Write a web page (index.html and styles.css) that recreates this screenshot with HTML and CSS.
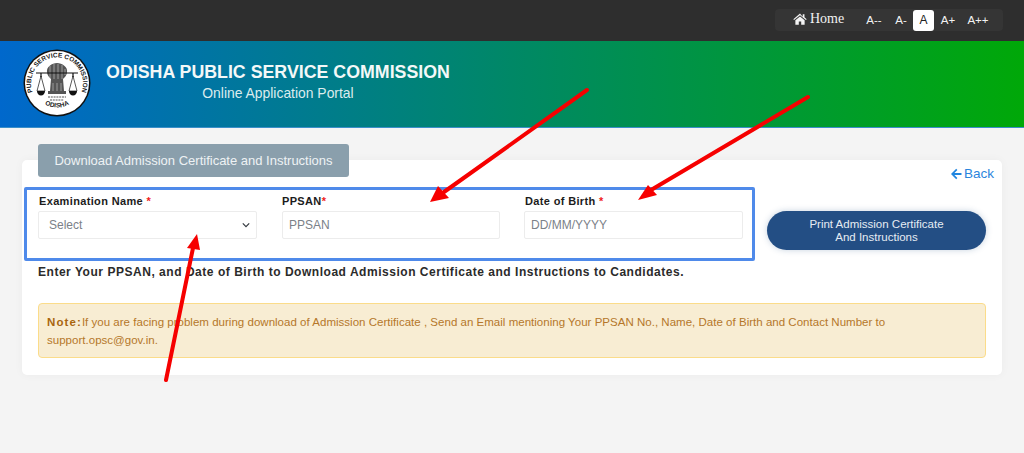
FILE: index.html
```html
<!DOCTYPE html>
<html lang="en">
<head>
  <meta charset="UTF-8">
  <meta name="viewport" content="width=device-width, initial-scale=1.0">
  <title>Odisha Public Service Commission</title>
  <link rel="stylesheet" href="styles.css">
</head>
<body>

<div class="topbar">
  <div class="tools">
    <a class="home">
      <svg class="home-icon" viewBox="0 0 16 14"><path d="M8 .6 .2 7.2l.9 1L8 2.500l6.900 5.700.9-1-2.600-2.200V1.400h-2v2.900zM2.600 8.600v5h4v-3.600h2.800v3.600h4v-5L8 4.100z"/></svg>
      Home
    </a>
    <span class="size size-1">A--</span>
    <span class="size size-2">A-</span>
    <span class="size size-active">A</span>
    <span class="size size-3">A+</span>
    <span class="size size-4">A++</span>
  </div>
</div>

<div class="header">
  <svg class="logo" viewBox="0 0 68 68">
    <defs>
      <path id="ringTop" d="M12.500 49A26 26 0 1 1 55.500 49"/>
      <path id="ringBottom" d="M15 50A25.500 25.500 0 0 0 53 50"/>
    </defs>
    <circle cx="34" cy="34" r="33.500" fill="#111"/>
    <circle cx="34" cy="34" r="32" fill="#fff"/>
    <text class="logo-ring"><textPath href="#ringTop" startOffset="50%" text-anchor="middle">PUBLIC SERVICE COMMISSION</textPath></text>
    <text class="logo-odisha"><textPath href="#ringBottom" startOffset="50%" text-anchor="middle">ODISHA</textPath></text>
    <!-- emblem -->
    <path d="M24 23c-1-5 5-9 10-9s11 4 10 9c0 3-2 5-4 7l1 12h2v3H25v-3h2l1-12c-2-2-4-4-4-7z" fill="#555"/>
    <path d="M27 17v12M31 15v15M35 15v15M39 16v14M42 20v6M30 34v8M34 34v8M38 34v8" stroke="#bbb" stroke-width=".7"/>
    <path d="M13 24h42M18 24v4M50 24v4" stroke="#111" stroke-width="1.200" fill="none"/>
    <path d="M18 27l-4 15h8zM50 27l-4 15h8z" fill="none" stroke="#111" stroke-width=".7"/>
    <path d="M14 42a4 4.500 0 0 0 8 0zM46 42a4 4.500 0 0 0 8 0z" fill="#111"/>
    <path d="M25 48h18M27 51h14" stroke="#555" stroke-width="1.100" stroke-dasharray="2 .8"/>
  </svg>
  <div class="header-text">
    <div class="header-title">ODISHA PUBLIC SERVICE COMMISSION</div>
    <div class="header-sub">Online Application Portal</div>
  </div>
</div>

<div class="card">
  <div class="tab">Download Admission Certificate and Instructions</div>
  <a class="back">
    <svg class="back-icon" viewBox="0 0 12 12"><path d="M6.200 .8 1 6l5.200 5.200 1.200-1.200-3-3H11.500V5H4.400l3-3z"/></svg>
    Back
  </a>

  <div class="form-row">
    <div class="form-box">
      <div class="field">
        <label>Examination Name <span class="req">*</span></label>
        <div class="control control-select">
          Select
          <svg class="chevron" viewBox="0 0 10 6"><path d="M1 1l4 4 4-4" fill="none" stroke="#343a40" stroke-width="1.500"/></svg>
        </div>
      </div>
      <div class="field field-mid">
        <label>PPSAN<span class="req">*</span></label>
        <div class="control">PPSAN</div>
      </div>
      <div class="field">
        <label>Date of Birth <span class="req">*</span></label>
        <div class="control">DD/MM/YYYY</div>
      </div>
    </div>
    <button class="print">Print Admission Certificate<br>And Instructions</button>
  </div>

  <p class="hint">Enter Your PPSAN, and Date of Birth to Download Admission Certificate and Instructions to Candidates.</p>

  <div class="note"><b>Note:</b>If you are facing problem during download of Admission Certificate , Send an Email mentioning Your PPSAN No., Name, Date of Birth and Contact Number to support.opsc@gov.in.</div>
</div>

<!-- red annotation arrows drawn over the page -->
<svg class="arrows" viewBox="0 0 1024 453">
  <g stroke="#f60000" stroke-width="4" fill="#f60000" stroke-linecap="round">
    <path d="M587 90 444 192" fill="none"/>
    <path d="M430 202 438 186 449 198z" stroke="none"/>
    <path d="M808 97 651 190" fill="none"/>
    <path d="M638 200 648 185 657 195z" stroke="none"/>
    <path d="M166 380 193 248" fill="none"/>
    <path d="M197 234 187 248 200 250z" stroke="none"/>
  </g>
</svg>

</body>
</html>
```

FILE: styles.css
```css
* {
  box-sizing: border-box;
}
body {
  margin: 0;
  height: 453px;
  overflow: hidden;
  position: relative;
  font-family: "Liberation Sans", Arial, sans-serif;
  background-color: #f4f4f4;
}
.topbar {
  height: 41px;
  background-color: #2e2e2e;
  display: flex;
  justify-content: flex-end;
  padding: 9px 21px 0 0;
}
.tools {
  width: 228px;
  height: 22px;
  background-color: #353535;
  border-radius: 4px;
  display: flex;
  align-items: center;
  padding-left: 18px;
  color: #f2f2f2;
  font-size: 11.500px;
}
.home {
  display: flex;
  align-items: center;
  gap: 3px;
  font-family: "Liberation Serif", serif;
  font-size: 14px;
  width: 73px;
  margin-top: -3px;
}
.home-icon {
  width: 14px;
  height: 12px;
  fill: #f2f2f2;
}
.size {
  text-align: center;
  line-height: 21px;
}
.size-1 {
  width: 16px;
}
.size-2 {
  width: 12px;
  margin-left: 13px;
}
.size-active {
  width: 21px;
  height: 21px;
  margin-left: 6px;
  background-color: #fff;
  border-radius: 3px;
  color: #222;
  font-size: 12px;
}
.size-3 {
  width: 16px;
  margin-left: 6px;
}
.size-4 {
  width: 22px;
  margin-left: 11px;
}
.header {
  height: 87px;
  background: linear-gradient(90deg, #0068cc, #008866 50%, #00a808);
  border-bottom: 1px solid #3b8fc9;
  display: flex;
  padding: 8px 0 0 23px;
}
.logo {
  width: 68px;
  height: 68px;
}
.logo-ring {
  font-size: 6.500px;
  font-weight: bold;
  fill: #222;
}
.logo-odisha {
  font-size: 6.500px;
  font-weight: bold;
  fill: #222;
}
.header-text {
  margin-left: 14px;
  width: 346px;
  color: #fff;
  text-align: center;
}
.header-title {
  margin-top: 13px;
  font-size: 17.800px;
  line-height: 20px;
  font-weight: bold;
  color: #f3f8f8;
  white-space: nowrap;
}
.header-sub {
  margin-top: 4px;
  font-size: 13.900px;
  line-height: 15px;
  color: #dcecee;
}
.card {
  position: relative;
  margin: 32px 22px 0;
  height: 215px;
  background-color: #fff;
  border-radius: 5px;
  box-shadow: 0 0 10px rgba(0, 0, 0, 0.04);
  padding: 0 16px;
}
.tab {
  position: relative;
  top: -16px;
  width: 311px;
  height: 33px;
  background-color: #8a9fac;
  border-radius: 3px;
  color: #eef2f4;
  font-size: 13px;
  line-height: 33px;
  text-align: center;
}
.back {
  position: absolute;
  top: 6px;
  right: 8px;
  display: flex;
  align-items: center;
  gap: 2px;
  color: #2a85dd;
  font-size: 13.500px;
}
.back-icon {
  width: 12px;
  height: 12px;
  fill: #1f86e0;
}
.form-row {
  display: flex;
  align-items: flex-start;
  margin: -6px 0 0 -14px;
}
.form-box {
  width: 731px;
  height: 74px;
  border: 3px solid #4f8aea;
  border-radius: 2px;
  padding: 4px 0 0 11px;
  display: flex;
  gap: 25px;
}
.field {
  width: 219px;
}
.field-mid {
  width: 218px;
  margin-right: -1px;
}
.field label {
  display: block;
  padding-left: 1px;
  font-size: 11px;
  line-height: 14px;
  font-weight: bold;
  letter-spacing: .35px;
  color: #1c1c1c;
  margin-bottom: 3px;
}
.field-mid label {
  padding-left: 0;
}
.req {
  color: #f01c1c;
}
.control {
  height: 28px;
  border: 1px solid #ececec;
  border-radius: 2px;
  padding-left: 6px;
  font-size: 12px;
  line-height: 26px;
  color: #7b8188;
}
.control-select {
  padding: 0 6px 0 10px;
  display: flex;
  justify-content: space-between;
  align-items: center;
}
.chevron {
  width: 8px;
  height: 6px;
}
.print {
  margin: 24px 0 0 12px;
  width: 219px;
  height: 39px;
  border: none;
  border-radius: 20px;
  background-color: #234e84;
  box-shadow: 0 0 6px rgba(35, 78, 132, 0.25);
  color: #e6ecf3;
  font-family: inherit;
  font-size: 11.500px;
  line-height: 13px;
}
.hint {
  margin: 4px 0 0;
  font-size: 12px;
  line-height: 14px;
  font-weight: bold;
  letter-spacing: .53px;
  color: #2b2b2b;
}
.note {
  margin-top: 24px;
  height: 55px;
  background-color: #f8edd3;
  border: 1px solid #fbdc8a;
  border-radius: 4px;
  padding: 9px 8px 0;
  font-size: 11.500px;
  line-height: 18px;
  letter-spacing: .02px;
  color: #b5772a;
}
.note b {
  color: #a9660f;
  letter-spacing: 1.100px;
}
.arrows {
  position: absolute;
  left: 0;
  top: 0;
  width: 1024px;
  height: 453px;
  pointer-events: none;
}
```
